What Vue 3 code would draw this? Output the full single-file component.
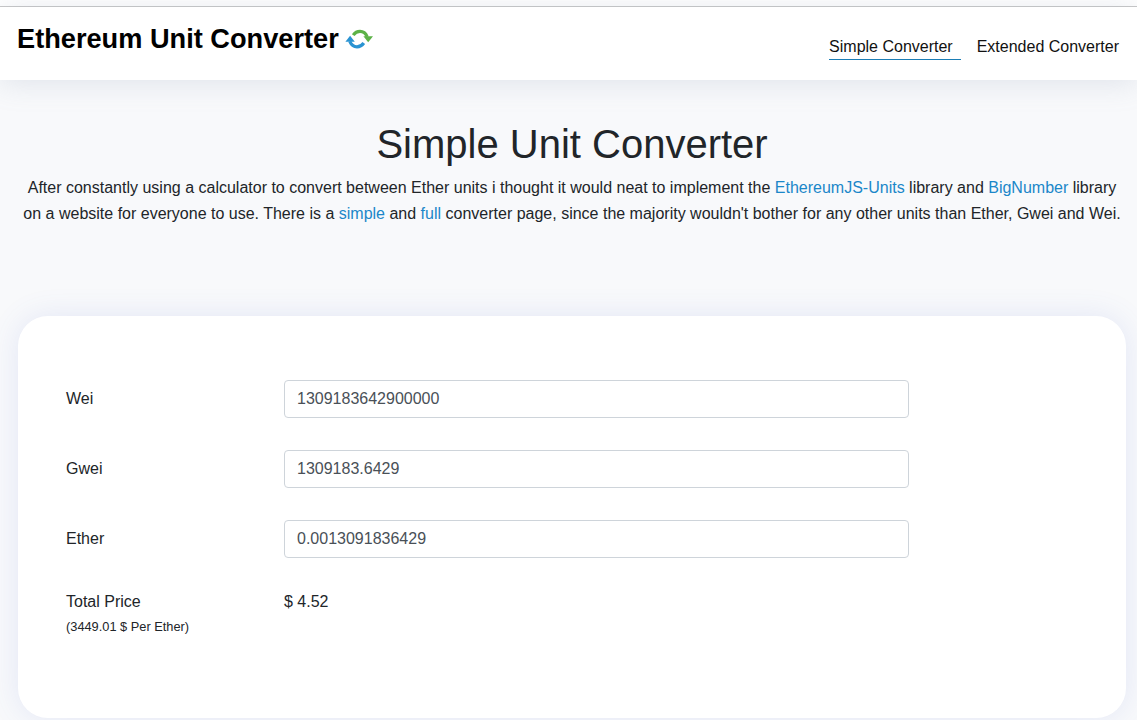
<script setup>
const rows = [
  { label: 'Wei', value: '1309183642900000' },
  { label: 'Gwei', value: '1309183.6429' },
  { label: 'Ether', value: '0.0013091836429' }
]
</script>

<template>
  <div class="page">
    <div class="topline"></div>
    <header class="header">
      <h1 class="brand">
        <span>Ethereum Unit Converter</span>
        <svg class="logo" viewBox="0 0 28 22" width="28" height="22" aria-hidden="true">
          <path d="M8.2 7.2C10 4.6 12.4 3.4 15 3.4c3.2 0 5.6 1.6 7.2 5.4" fill="none" stroke="#5cb247" stroke-width="3.2"/>
          <path d="M18.4 8.3h9.6l-4.8 6z" fill="#5cb247"/>
          <path d="M18.8 15c-1.8 2.6-4.2 3.8-6.8 3.8-3.2 0-5.6-1.6-7.2-5.4" fill="none" stroke="#2a93d2" stroke-width="3.2"/>
          <path d="M9.8 13.8H0.4l4.7-6z" fill="#2a93d2"/>
        </svg>
      </h1>
      <nav class="nav">
        <a class="nav-link active">Simple Converter</a>
        <a class="nav-link">Extended Converter</a>
      </nav>
    </header>

    <main class="main">
      <section class="intro">
        <h2 class="title">Simple Unit Converter</h2>
        <p class="lead">
          After constantly using a calculator to convert between Ether units i thought it would neat to implement the
          <a>EthereumJS-Units</a> library and <a>BigNumber</a> library on a website for everyone to use. There is a
          <a>simple</a> and <a>full</a> converter page, since the majority wouldn't bother for any other units than Ether, Gwei and Wei.
        </p>
      </section>

      <section class="card">
        <div v-for="row in rows" :key="row.label" class="row">
          <label class="label">{{ row.label }}</label>
          <input class="input" type="text" :value="row.value" />
        </div>
        <div class="row total">
          <div class="label">
            <div>Total Price</div>
            <small class="per">(3449.01 $ Per Ether)</small>
          </div>
          <div class="price">$ 4.52</div>
        </div>
      </section>
    </main>
  </div>
</template>

<style>
html, body { margin: 0; background: #f8f9fb; }
</style>

<style scoped>
.page {
  height: 720px;
  overflow: hidden;
  background: #f8f9fb;
  color: #212529;
  font-family: "Liberation Sans", Arial, sans-serif;
  font-size: 16px;
  line-height: 24px;
}
.topline {
  height: 6px;
  background: #fff;
  border-bottom: 1px solid #c8c8c8;
}
.header {
  position: relative;
  display: flex;
  justify-content: space-between;
  height: 73px;
  padding: 0 18px 0 17px;
  background: #fff;
  box-shadow: 0 2px 30px rgba(130, 145, 175, 0.22);
}
.brand {
  display: flex;
  align-items: flex-start;
  gap: 6px;
  margin: 15px 0 0;
  color: #000;
  font-size: 27.2px;
  line-height: 34px;
  font-weight: 700;
}
.logo { margin-top: 6px; }
.nav {
  display: flex;
  align-items: flex-start;
  gap: 16px;
  margin-top: 28px;
}
.nav-link {
  color: #111;
  height: 24px;
  line-height: 24px;
}
.nav-link.active {
  padding-right: 8px;
  border-bottom: 1px solid #1b7db5;
}
.main { padding: 0 11px 0 18px; }
.intro {
  text-align: center;
  height: 236px;
}
.title {
  margin: 0;
  padding-top: 40px;
  font-size: 40px;
  line-height: 48px;
  font-weight: 400;
}
.lead {
  margin: 7px 0 0;
  line-height: 26px;
  color: #212529;
}
.lead a { color: #1b87c9; }
.card {
  box-sizing: border-box;
  height: 402px;
  padding: 64px 48px 0;
  background: #fff;
  border-radius: 30px;
  box-shadow: 0 0 30px rgba(82, 105, 210, 0.13);
}
.row {
  display: flex;
  align-items: center;
  height: 38px;
  margin-bottom: 32px;
}
.label { width: 218px; flex: none; }
.input {
  box-sizing: border-box;
  width: 625px;
  height: 38px;
  padding: 6px 12px;
  border: 1px solid #ced4da;
  border-radius: 4px;
  background: #fff;
  color: #495057;
  font: inherit;
  outline: none;
}
.total { align-items: flex-start; height: auto; margin: 0; }
.per {
  display: block;
  font-size: 12.8px;
  line-height: 26px;
}
</style>
